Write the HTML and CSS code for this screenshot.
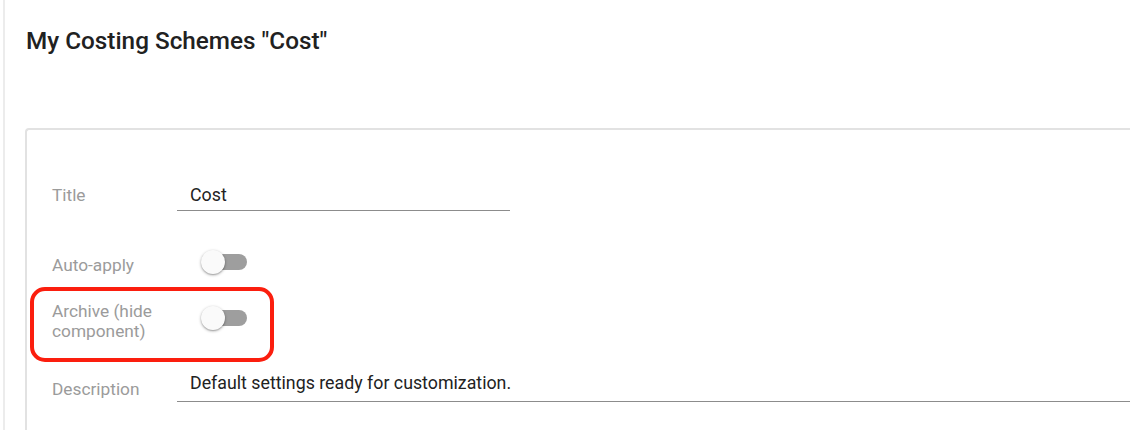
FILE: index.html
```html
<!DOCTYPE html>
<html lang="en">
<head>
    <meta charset="UTF-8">
    <meta name="viewport" content="width=device-width, initial-scale=1.0">
    <title>My Costing Schemes</title>
    <link rel="stylesheet" href="styles.css">
</head>
<body>
    <div id="page">
        <h1 class="page-title">My Costing Schemes "Cost"</h1>
        <div class="card">
            <div class="row">
                <div class="label">Title</div>
                <div class="field field-short">Cost</div>
            </div>
            <div class="row row-toggle">
                <div class="label">Auto-apply</div>
                <div class="toggle"><span class="track"></span><span class="thumb"></span></div>
            </div>
            <div class="row row-toggle marked">
                <div class="label">Archive (hide<br>component)</div>
                <div class="toggle"><span class="track"></span><span class="thumb"></span></div>
            </div>
            <div class="row row-desc">
                <div class="label">Description</div>
                <div class="field field-area">Default settings ready for customization.</div>
            </div>
        </div>
    </div>
</body>
</html>
```

FILE: styles.css
```css
* { margin:0; padding:0; box-sizing: border-box;}
body {
    font-family: Roboto, "Liberation Sans", sans-serif;
    background: #fff;
    overflow: hidden;
}
#page {
    margin-left: 3px;
    border-left: 2px solid #ececec;
    padding-left: 20px;
    min-height: 100vh;
}
.page-title {
    font-size: 24.3px;
    font-weight: 500;
    line-height: 32px;
    color: #212121;
    padding-top: 25px;
    padding-left: 1px;
}
.card {
    margin-top: 71px;
    margin-right: -40px;
    border: 2px solid #e2e2e2;
    border-right: none;
    border-radius: 4px 0 0 0;
    padding: 55px 0 40px 25px;
    min-height: 320px;
}
.row {
    display: flex;
    align-items: flex-start;
}
.label {
    width: 125px;
    flex-shrink: 0;
    font-size: 17.3px;
    line-height: 20px;
    color: #9b9b9b;
}
.field {
    font-size: 17.8px;
    line-height: 20px;
    color: #222;
    padding: 0 13px 5px;
    border-bottom: 1px solid #8c8c8c;
}
.field-short {
    width: 333px;
}
.field-area {
    flex: 1;
    padding-bottom: 8px;
}

/* 토글 줄 */
.row-toggle {
    align-items: center;
    margin-top: 39px;
}
.row-toggle + .row-toggle {
    margin-top: 21px;
}
.toggle {
    position: relative;
    width: 46px;
    height: 30px;
    margin-left: 24px;
}
.track {
    position: absolute;
    left: 4px;
    top: 4px;
    width: 42px;
    height: 16px;
    border-radius: 8px;
    background-color: #9e9e9e;
}
.thumb {
    position: absolute;
    left: 0;
    top: 0;
    width: 24px;
    height: 24px;
    border-radius: 50%;
    background-color: #fafafa;
    box-shadow: 0 1px 3px rgba(0,0,0,.35), 0 1px 1px rgba(0,0,0,.12);
}

/* 빨간 표시 */
.marked {
    position: relative;
}
.marked::after {
    content: "";
    position: absolute;
    left: -22px;
    top: -14px;
    width: 236px;
    height: 67px;
    border: 4px solid #fb1e0e;
    border-radius: 15px;
}
.row-desc {
    margin-top: 32px;
}
.row-desc .label {
    padding-top: 6px;
}
```
